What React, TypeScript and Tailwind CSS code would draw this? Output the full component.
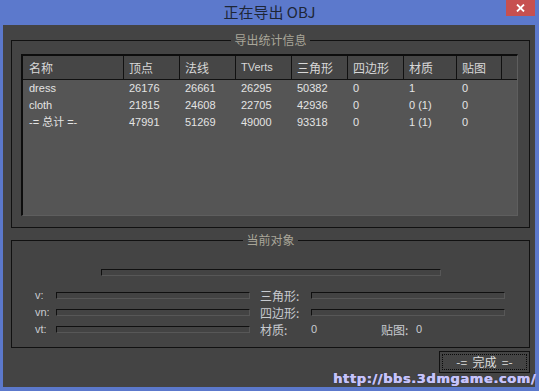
import React from "react";

type Row = { name: string; cells: string[] };

const columns = ["名称", "顶点", "法线", "TVerts", "三角形", "四边形", "材质", "贴图", ""];
const widths = ["w-[101px] pl-[6px]", "w-[56px] pl-[5px]", "w-[56px] pl-[5px]", "w-[56px] pl-[5px]", "w-[56px] pl-[5px]", "w-[56px] pl-[5px]", "w-[53px] pl-[5px]", "w-[45px] pl-[5px]", "flex-1"];

const rows: Row[] = [
  { name: "dress", cells: ["26176", "26661", "26295", "50382", "0", "1", "0"] },
  { name: "cloth", cells: ["21815", "24608", "22705", "42936", "0", "0 (1)", "0"] },
  { name: "-= 总计 =-", cells: ["47991", "51269", "49000", "93318", "0", "1 (1)", "0"] },
];

const font = "font-['Liberation_Sans','Noto_Sans_CJK_SC',sans-serif]";

function Bar({ w }: { w: string }) {
  return <div className={`${w} h-[7px] border-t border-l border-[#101010] border-r border-b border-r-[#575757] border-b-[#575757] bg-[#434343]`} />;
}

function GroupTitle({ children }: { children: React.ReactNode }) {
  return (
    <div className="absolute -top-[9px] left-0 right-0 flex justify-center">
      <span className="bg-[#444444] px-[3px] text-[12px] leading-[16px] text-[#a9a699] font-['Noto_Sans_CJK_SC',sans-serif]">
        {children}
      </span>
    </div>
  );
}

export default function App() {
  return (
    <div className={`relative w-[539px] h-[391px] bg-[#5c79cc] flex flex-col overflow-hidden ${font}`}>
      {/* title bar */}
      <div className="h-[25px] flex items-center justify-center pb-[3px] relative">
        <span className="text-[15px] text-[#1e2636] font-['Noto_Sans_CJK_SC',sans-serif] leading-none">正在导出 OBJ</span>
        <div className="absolute top-0 right-[4px] w-[29px] h-[16px] bg-[#c75050] flex items-center justify-center">
          <svg width="9" height="8" viewBox="0 0 9 8">
            <path d="M1 0.5l7 7M8 0.5l-7 7" stroke="#ffffff" strokeWidth="1.8" />
          </svg>
        </div>
      </div>

      {/* client area */}
      <div className="flex-1 ml-[3px] mr-[4px] mb-[4px] bg-[#444444] pl-[8px] pt-[15px] flex flex-col">
        {/* export stats group */}
        <div className="relative w-[519px] h-[188px] border border-[#111111]">
          <GroupTitle>导出统计信息</GroupTitle>
          <div className="ml-[9px] mt-[13px] w-[497px] h-[162px] border-t-2 border-l-2 border-[#0d0d0d] border-r border-b border-r-[#5e5e5e] border-b-[#5e5e5e] bg-[#555555] flex flex-col">
            <div className="h-[24px] flex bg-[#464646] border-b border-[#111111]">
              {columns.map((c, i) => (
                <div
                  key={i}
                  className={`${widths[i]} h-full flex items-center ${i < 8 ? "border-r border-[#111111]" : ""} text-[#d8d8d8] ${i === 3 ? "text-[11px]" : "text-[12px] font-['Noto_Sans_CJK_SC',sans-serif]"}`}
                >
                  {c}
                </div>
              ))}
            </div>
            {rows.map((r) => (
              <div key={r.name} className="h-[17px] flex items-center text-[11px] text-[#e4e4e4]">
                <div className="w-[101px] pl-[6px]">{r.name}</div>
                {r.cells.map((v, i) => (
                  <div key={i} className={`${widths[i + 1]}`}>
                    {v}
                  </div>
                ))}
              </div>
            ))}
          </div>
        </div>

        {/* current object group */}
        <div className="relative mt-[12px] w-[519px] h-[108px] border border-[#111111]">
          <GroupTitle>当前对象</GroupTitle>
          <div className="ml-[89px] mt-[28px]">
            <Bar w="w-[340px]" />
          </div>
          <div className="mt-[11px] flex flex-col text-[11px] text-[#c8cbd0]">
            <div className="h-[17px] flex items-center">
              <span className="ml-[23px] w-[21px]">v:</span>
              <Bar w="w-[194px]" />
              <span className="ml-[10px] w-[51px] text-[12px] font-['Noto_Sans_CJK_SC',sans-serif]">三角形:</span>
              <Bar w="w-[194px]" />
            </div>
            <div className="h-[17px] flex items-center">
              <span className="ml-[23px] w-[21px]">vn:</span>
              <Bar w="w-[194px]" />
              <span className="ml-[10px] w-[51px] text-[12px] font-['Noto_Sans_CJK_SC',sans-serif]">四边形:</span>
              <Bar w="w-[194px]" />
            </div>
            <div className="h-[17px] flex items-center">
              <span className="ml-[23px] w-[21px]">vt:</span>
              <Bar w="w-[194px]" />
              <span className="ml-[10px] w-[51px] text-[12px] font-['Noto_Sans_CJK_SC',sans-serif]">材质:</span>
              <span className="w-[70px]">0</span>
              <span className="w-[35px] text-[12px] font-['Noto_Sans_CJK_SC',sans-serif]">贴图:</span>
              <span>0</span>
            </div>
          </div>
        </div>

        {/* footer button */}
        <div className="w-[519px] mt-[3px] flex justify-end">
          <div className="w-[91px] h-[22px] border border-[#111111] bg-[#444444] p-[2px]">
            <div className="w-full h-full border border-dotted border-[#0a0a0a] flex items-center justify-center text-[12px] text-[#dddddd] font-['Noto_Sans_CJK_SC',sans-serif] whitespace-pre">
              -=  完成  =-
            </div>
          </div>
        </div>
      </div>

      {/* watermark */}
      <div className="absolute right-[3px] bottom-[4px] text-[13px] leading-[16px] font-bold text-[#c6c3fa] font-['DejaVu_Sans',sans-serif] tracking-[0.6px] [text-shadow:0.5px_0_0_#c6c3fa,0_0_1px_#2e2e60]">
        http://bbs.3dmgame.com/
      </div>
    </div>
  );
}
